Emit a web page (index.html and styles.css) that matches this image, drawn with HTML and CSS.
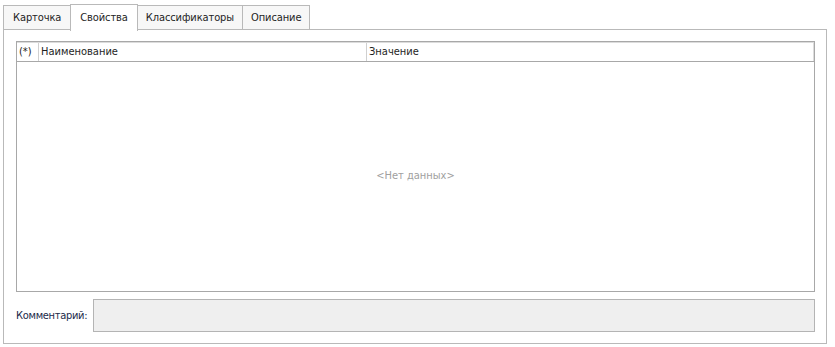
FILE: index.html
```html
<!DOCTYPE html>
<html lang="ru">

<head>
    <meta charset="UTF-8">
    <title>Свойства</title>
    <link rel="stylesheet" href="styles.css">
</head>

<body>
    <div class="tabs">
        <div class="tab">Карточка</div>
        <div class="tab active">Свойства</div>
        <div class="tab">Классификаторы</div>
        <div class="tab">Описание</div>
    </div>

    <div class="panel">
        <div class="grid">
            <div class="grid-header">
                <div class="col col-mark">(*)</div>
                <div class="col col-name">Наименование</div>
                <div class="col col-value">Значение</div>
            </div>
            <div class="grid-body">&lt;Нет данных&gt;</div>
        </div>

        <div class="comment-row">
            <label class="comment-label">Комментарий:</label>
            <div class="comment-box"></div>
        </div>
    </div>
</body>

</html>
```

FILE: styles.css
```css
body {
    margin: 0;
    background-color: #fff;
    font-family: Tahoma, "DejaVu Sans Condensed", "Liberation Sans", sans-serif;
    font-size: 11px;
    color: #1e1e1e;
}

.tabs {
    display: flex;
    align-items: flex-end;
    height: 30px;
    padding-left: 3px;
    position: relative;
    z-index: 1;
}

.tab {
    height: 23px;
    line-height: 23px;
    padding: 0 8px;
    border: 1px solid #b9b9b9;
    border-bottom: none;
    border-left: none;
    background-color: #f7f7f7;
    margin-bottom: 1px;
    letter-spacing: -0.1px;
}

.tab:first-child {
    border-left: 1px solid #b9b9b9;
    padding: 0 9px;
}

.tab.active {
    height: 26px;
    line-height: 25px;
    background-color: #fff;
    border-left: 1px solid #b9b9b9;
    margin-left: -1px;
    margin-right: -1px;
    margin-bottom: -1px;
    padding: 0 9px;
    z-index: 2;
    position: relative;
}

.tab.active + .tab {
    border-left: 1px solid #b9b9b9;
}

.panel {
    margin: -1px 0 0 3px;
    width: 824px;
    height: 315px;
    border: 1px solid #b9b9b9;
    padding: 11px 11px 0 12px;
    box-sizing: border-box;
    display: flex;
    flex-direction: column;
}

.grid {
    height: 249px;
    border: 1px solid #a8a8a8;
    display: flex;
    flex-direction: column;
}

.grid-header {
    display: flex;
    height: 18px;
    border-top: 1px solid #dcdcdc;
    border-bottom: 1px solid #a8a8a8;
    line-height: 18px;
}

.col {
    padding-left: 2px;
    border-right: 1px solid #d0d0d0;
}

.col-mark {
    width: 19px;
}

.col-name {
    width: 325px;
}

.col-value {
    flex: 1;
    border-right: 1px solid #dcdcdc;
}

.grid-body {
    flex: 1;
    display: flex;
    align-items: center;
    justify-content: center;
    color: #a0a0a0;
    padding-bottom: 2px;
}

.comment-row {
    display: flex;
    align-items: center;
    margin-top: 7px;
}

.comment-label {
    width: 77px;
    color: #1b2a4a;
    letter-spacing: -0.3px;
}

.comment-box {
    flex: 1;
    height: 31px;
    background-color: #efefef;
    border: 1px solid #b4b4b4;
}
```
